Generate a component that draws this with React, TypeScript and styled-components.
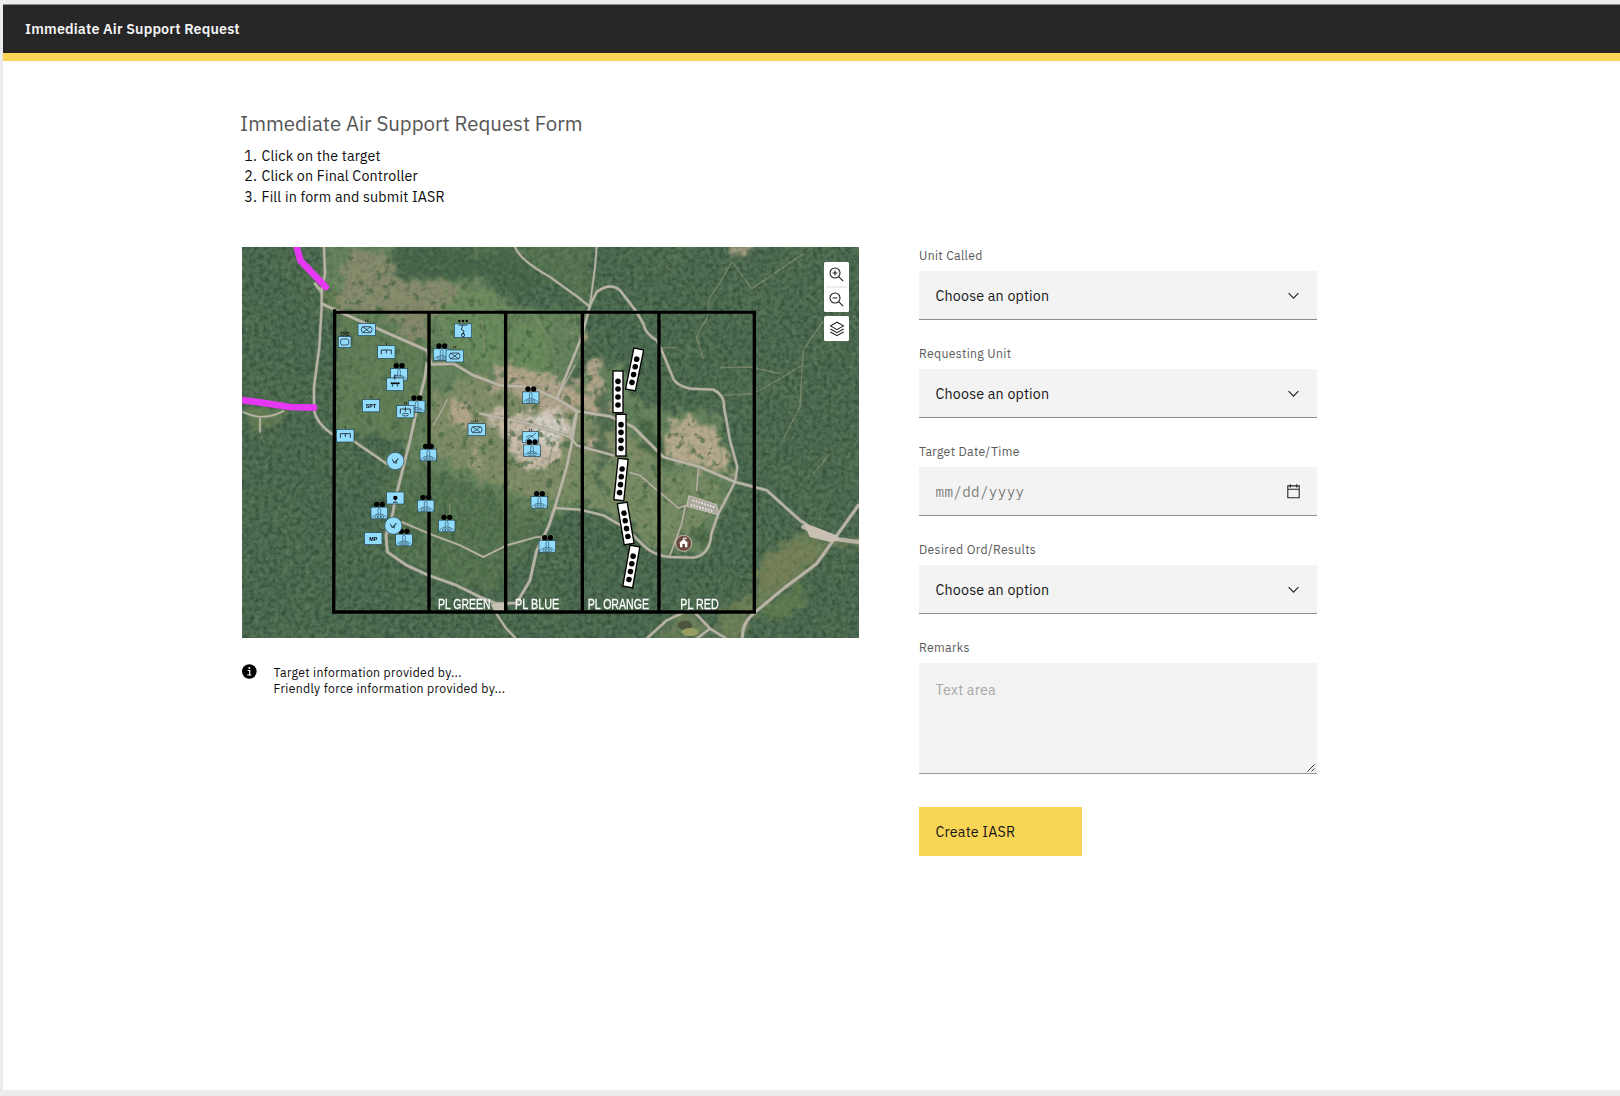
import React from "react";
import styled, { createGlobalStyle } from "styled-components";

const SANS = `"IBM Plex Sans", Roboto, "Liberation Sans", sans-serif`;

const GlobalStyle = createGlobalStyle`
  * { box-sizing: border-box; }
  body { margin: 0; background: #ececec; font-family: ${SANS}; }
`;

/* ---------- page shell ---------- */

const Shell = styled.div`
  height: 1096px;
  padding: 4px 0 6px 3px;
  overflow: hidden;
  background: #ececec;
`;

const Page = styled.div`
  height: 100%;
  background: #fff;
`;

const Header = styled.header`
  display: flex;
  align-items: center;
  height: 57px;
  padding: 0 0 1px 22px;
  background: #262626;
  border-top: 1px solid #8e8e8e;
  border-bottom: 8px solid #f9d556;
`;

const Brand = styled.span`
  color: #f4f4f4;
  font-size: 14.29px;
  font-weight: 600;
  letter-spacing: 0.163px;
  white-space: nowrap;
`;

const Main = styled.main`
  padding: 49px 0 0 237px;
`;

const Title = styled.h1`
  margin: 0;
  height: 28px;
  color: #565656;
  font-size: 20.42px;
  font-weight: 400;
  line-height: 28px;
`;

const Steps = styled.ol`
  margin: 8px 0 40px;
  padding: 0 0 0 4.3px;
  list-style: none;
  color: #0c0c0c;
  font-size: 14.29px;
  letter-spacing: 0.163px;
  line-height: 20.4px;
  height: 61px;
`;

const Step = styled.li`
  display: grid;
  grid-template-columns: 17.2px auto;
`;

const Columns = styled.div`
  display: grid;
  grid-template-columns: 617px 398px;
  column-gap: 60px;
  align-items: start;
  padding-left: 2px;
`;

/* ---------- map ---------- */

const MapFrame = styled.div`
  position: relative;
  height: 391px;
  overflow: hidden;
  background: #46634c;
`;

const MapSvg = styled.svg`
  display: block;
  width: 617px;
  height: 391px;
`;

const MapControls = styled.div`
  position: absolute;
  top: 15px;
  right: 10px;
  display: flex;
  flex-direction: column;
  gap: 4px;
  width: 25px;
`;

const ControlGroup = styled.div`
  display: flex;
  flex-direction: column;
  background: #fff;
  border-radius: 1.5px;
`;

const ControlButton = styled.button`
  display: grid;
  place-items: center;
  height: 25px;
  padding: 0;
  border: 0;
  background: transparent;
  color: #161616;
`;

const ControlRule = styled.hr`
  width: 20px;
  height: 2px;
  margin: -1px auto;
  border: 0;
  background: #ededed;
`;

const Note = styled.div`
  display: flex;
  gap: 16.6px;
  padding-top: 25.5px;
  color: #0c0c0c;
  font-size: 12.25px;
  letter-spacing: 0.327px;
  line-height: 16.3px;
  white-space: nowrap;
`;

const NoteLines = styled.div`
  display: flex;
  flex-direction: column;
`;

/* ---------- form ---------- */

const Form = styled.form`
  display: flex;
  flex-direction: column;
  gap: 25px;
`;

const Field = styled.div`
  display: flex;
  flex-direction: column;
  gap: 8px;
`;

const Label = styled.label`
  height: 16px;
  color: #5a5a5a;
  font-size: 12.25px;
  letter-spacing: 0.327px;
  line-height: 16px;
`;

const Picker = styled.button`
  display: flex;
  align-items: center;
  justify-content: space-between;
  height: 49px;
  padding: 1px 15px 0 16.5px;
  border: 0;
  border-bottom: 1px solid #8d8d8d;
  background: #f3f3f3;
  color: #161616;
  font: 400 14.29px/20px ${SANS};
  letter-spacing: 0.163px;
  text-align: left;
`;

const DateBox = styled.div`
  display: flex;
  align-items: center;
  height: 49px;
  padding: 1px 15px 0 16.5px;
  border-bottom: 1px solid #8d8d8d;
  background: #f3f3f3;
`;

const DateInput = styled.input`
  flex: 1;
  min-width: 0;
  height: 30px;
  padding: 0;
  border: 0;
  outline: 0;
  background: transparent;
  font: 400 14.29px/20px "IBM Plex Mono", "Liberation Mono", monospace;
  letter-spacing: 0.327px;
  &::placeholder { color: #7c7c7c; opacity: 1; }
`;

const AreaBox = styled.div`
  position: relative;
  height: 111px;
  border-bottom: 1px solid #9a9a9a;
  background: #f3f3f3;
`;

const Area = styled.textarea`
  display: block;
  width: 100%;
  height: 100%;
  padding: 17px 16.5px;
  border: 0;
  outline: 0;
  resize: none;
  background: transparent;
  font: 400 14.29px/20px ${SANS};
  letter-spacing: 0.163px;
  &::placeholder { color: #a8a8a8; opacity: 1; }
`;

const Grip = styled.svg`
  position: absolute;
  right: 2px;
  bottom: 1px;
`;

const Submit = styled.button`
  width: 163px;
  height: 49px;
  margin-top: 8px;
  padding: 1px 16.5px 0;
  border: 0;
  background: #f9d556;
  color: #161616;
  font: 400 14.29px/20px ${SANS};
  letter-spacing: 0.163px;
  text-align: left;
`;

/* ---------- icons ---------- */

const ZoomIcon = ({ plus }: { plus?: boolean }) => (
  <svg width="15" height="15" viewBox="0 0 15 15" fill="none" stroke="currentColor" strokeWidth="1.05">
    <circle cx="6" cy="6" r="5" />
    <path d={plus ? "M9.6 9.6 14.2 14.2M3.6 6h4.8M6 3.6v4.8" : "M9.6 9.6 14.2 14.2M3.6 6h4.8"} />
  </svg>
);

const LayersIcon = () => (
  <svg width="16" height="16" viewBox="0 0 16 16" fill="none" stroke="currentColor" strokeWidth="1.05" strokeLinejoin="round">
    <path d="M8 1.2 14.6 4.9 8 8.6 1.4 4.9Z" />
    <path d="M1.4 8 8 11.6 14.6 8M1.4 11 8 14.6 14.6 11" />
  </svg>
);

const ChevronIcon = () => (
  <svg width="17" height="17" viewBox="0 0 17 17" fill="none" stroke="#262626" strokeWidth="1.2">
    <path d="M3.6 6.2 8.5 11.1 13.4 6.2" />
  </svg>
);

const CalendarIcon = () => (
  <svg width="17" height="17" viewBox="0 0 17 17" fill="none" stroke="#262626" strokeWidth="1.1">
    <path d="M2.8 2.9h11.4v11.9H2.8ZM2.8 6.3h11.4M5.3 1.2v3.4M11.7 1.2v3.4" />
  </svg>
);

const InfoIcon = () => (
  <svg width="15" height="15" viewBox="0 0 15 15">
    <circle cx="7.3" cy="7.5" r="7.3" fill="#000" />
    <circle cx="7.3" cy="4" r="1" fill="#fff" />
    <path d="M5.6 6.5h2.1v4.4M5.2 11h4.2" fill="none" stroke="#fff" strokeWidth="1.15" />
  </svg>
);

/* ---------- map symbols ---------- */

type Pt = [number, number];
const SKY = "#92dcfe";
const INK = "#22424f";

const Plate = ({ x, y, w = 52, h = 36 }: { x: number; y: number; w?: number; h?: number }) => (
  <rect x={x - w / 2} y={y - h / 2} width={w} height={h} fill={SKY} stroke={INK} strokeWidth="2" />
);

const Bars = ({ x, y, n = 2 }: { x: number; y: number; n?: number }) => (
  <path d={n === 2 ? `M${x - 3} ${y}v8M${x + 3} ${y}v8` : `M${x} ${y}v8`} stroke="#111" strokeWidth="2" />
);

const Battery = ({ x, y }: { x: number; y: number }) => (
  <g>
    <Plate x={x} y={y} w={50} h={35} />
    <g fill="none" stroke={INK} strokeWidth="1.7">
      <path d={`M${x - 25} ${y + 15}Q${x} ${y - 10} ${x + 25} ${y + 15}`} />
      <path d={`M${x - 4} ${y + 8}v-20q4-6 8 0v20`} />
      <circle cx={x - 9} cy={y + 12} r="4" />
      <circle cx={x} cy={y + 12} r="4" />
      <circle cx={x + 9} cy={y + 12} r="4" />
    </g>
    <circle cx={x - 8} cy={y - 26} r="8" />
    <circle cx={x + 9} cy={y - 26} r="8" />
  </g>
);

const Mechanized = ({ x, y }: { x: number; y: number }) => (
  <g>
    <Plate x={x} y={y} />
    <Bars x={x} y={y - 30} />
    <g fill="none" stroke="#111" strokeWidth="2">
      <rect x={x - 16} y={y - 9} width="32" height="18" rx="8" />
      <path d={`M${x - 12} ${y - 9}L${x + 12} ${y + 9}M${x + 12} ${y - 9}L${x - 12} ${y + 9}`} />
    </g>
  </g>
);

const Engineer = ({ x, y }: { x: number; y: number }) => (
  <g>
    <Plate x={x} y={y} h={38} />
    <Bars x={x} y={y - 29} n={1} />
    <path d={`M${x - 15} ${y + 7}v-13h30v13M${x} ${y - 6}v10`} fill="none" stroke="#111" strokeWidth="2.4" />
  </g>
);

const Beacon = ({ x, y }: { x: number; y: number }) => (
  <g>
    <circle cx={x} cy={y} r="26" fill={SKY} stroke={INK} strokeWidth="2" />
    <path d={`M${x - 9} ${y - 5}q1 12 14 12M${x - 4} ${y + 5}l6-6 1 4 3-9h4`} fill="none" stroke="#111" strokeWidth="2.4" />
  </g>
);

const Minefield = ({ x, y, r }: { x: number; y: number; r: number }) => (
  <g transform={`translate(${x} ${y}) rotate(${r})`}>
    <rect x="-15" y="-62" width="30" height="125" fill="#fff" stroke="#000" strokeWidth="4" />
    {[-31, -8, 16, 40].map((d) => (
      <circle key={d} cx="0" cy={d} r="8.4" />
    ))}
  </g>
);

const batteries: Pt[] = [
  [605, 343], [477, 402], [530, 499], [872, 472], [565, 644], [418, 818],
  [557, 797], [620, 857], [492, 899], [898, 786], [922, 918],
];
const mechanized: Pt[] = [[380, 268], [644, 347], [710, 568]];
const engineers: Pt[] = [[439, 335], [316, 586]];
const beacons: Pt[] = [[466, 662], [460, 856]];
const minefields: [number, number, number][] = [
  [1184, 387, 11.5], [1134, 454, 0], [1143, 584, 0], [1143, 717, 6], [1157, 849, -9.5], [1174, 978, 10],
];
const phaseLines = [
  { x: 594, w: 158, name: "PL GREEN" },
  { x: 825, w: 133, name: "PL BLUE" },
  { x: 1043, w: 184, name: "PL ORANGE" },
  { x: 1321, w: 115, name: "PL RED" },
];

const roads: { d: string; w: number }[] = [
  { d: "M252 20L255 100 245 150 245 200 238 320 222 440 222 510Q230 550 275 580L345 605 440 670", w: 9 },
  { d: "M225 130L245 155M245 190L345 235 560 330", w: 10 },
  { d: "M560 330L575 372 640 370 700 405 780 435 870 440 950 475 1010 512 1110 528 1180 560 1270 650 1380 680 1485 725 1580 750 1680 840 1740 880", w: 10 },
  { d: "M560 370L555 410 530 510 510 600 490 680 465 780 458 820 438 885 442 935 500 975 565 1005 650 1035 720 1070 770 1090 830 1088 870 1020 890 930 925 860 945 800 980 680 995 610 1010 515", w: 10 },
  { d: "M945 803L1020 808 1090 825 1160 865 1210 915Q1240 945 1290 950L1360 952Q1410 945 1414 880L1435 820 1485 725 1492 680 1470 600 1452 500Q1455 465 1420 448L1350 445Q1310 435 1300 415L1265 330 1250 300Q1215 280 1210 250L1190 215 1140 150Q1110 125 1070 155L1050 195 1025 290 950 475", w: 9 },
  { d: "M825 20Q840 60 930 110L1020 175 1050 200", w: 8 },
  { d: "M1070 20L1065 80 1050 195", w: 7 },
  { d: "M485 845L580 885 660 915 730 950 800 915 890 890 925 890", w: 7 },
  { d: "M1855 795L1780 900 1730 970 1630 1045 1540 1120Q1505 1150 1507 1195", w: 11 },
  { d: "M1690 860L1780 895 1855 905", w: 14 },
  { d: "M1220 1195L1280 1140 1345 1110M1360 1112L1410 1165 1460 1195M1410 1165L1370 1195", w: 9 },
  { d: "M1170 697L1200 705 1240 740 1315 803 1340 795M1335 800L1325 850 1290 945M1375 685L1370 750", w: 6 },
  { d: "M10 515Q70 545 130 512M60 530V575", w: 7 },
  { d: "M720 520L860 548 990 590 1010 615 1120 645M1010 515L990 590", w: 9 },
  { d: "M580 555L600 520 622 478M950 475L1005 375", w: 5 },
  { d: "M766 1115L795 1160 825 1192", w: 8 },
];

const trails = [
  "M1475 65L1450 110 1405 180 1402 230 1370 290 1390 355M1478 65L1535 145 1580 115 1690 40",
  "M1750 240L1690 330 1685 400 1680 500 1630 595M1685 375L1630 410 1540 460 1450 465",
  "M1255 325L1310 320M1440 382L1530 380 1620 400M740 445L710 550M725 240L735 340M870 210L920 280",
  "M1770 640L1720 700M940 600L910 760M630 790L625 880",
];

const Terrain = () => (
  <g>
    <defs>
      <filter id="canopy" x="0" y="0" width="100%" height="100%" colorInterpolationFilters="sRGB">
        <feTurbulence type="fractalNoise" baseFrequency="0.071" numOctaves="4" seed="4" />
        <feColorMatrix values="0 0 0 0 0.14  0 0 0 0 0.24  0 0 0 0 0.17  2.6 0 0 0 -1.08" />
      </filter>
      <filter id="glint" x="0" y="0" width="100%" height="100%" colorInterpolationFilters="sRGB">
        <feTurbulence type="fractalNoise" baseFrequency="0.067" numOctaves="4" seed="21" />
        <feColorMatrix values="0 0 0 0 0.48  0 0 0 0 0.6  0 0 0 0 0.45  0 2.2 0 0 -1.05" />
      </filter>
      <filter id="drift" x="0" y="0" width="100%" height="100%" colorInterpolationFilters="sRGB">
        <feTurbulence type="fractalNoise" baseFrequency="0.008" numOctaves="3" seed="2" />
        <feColorMatrix values="0 0 0 0 0.4  0 0 0 0 0.52  0 0 0 0 0.34  0 3 0 0 -1.3" />
      </filter>
      <filter id="patchy" x="0" y="0" width="100%" height="100%" colorInterpolationFilters="sRGB">
        <feTurbulence type="fractalNoise" baseFrequency="0.035" numOctaves="4" seed="9" />
        <feColorMatrix values="0 0 0 0 0.27  0 0 0 0 0.4  0 0 0 0 0.26  8 0 0 0 -4.8" result="trees" />
        <feComposite in="trees" in2="SourceAlpha" operator="in" />
      </filter>
      <filter id="ragged" x="-10%" y="-10%" width="120%" height="120%" colorInterpolationFilters="sRGB">
        <feTurbulence type="fractalNoise" baseFrequency="0.03" numOctaves="4" seed="7" result="n" />
        <feDisplacementMap in="SourceGraphic" in2="n" scale="75" xChannelSelector="R" yChannelSelector="G" />
        <feGaussianBlur stdDeviation="4" />
      </filter>
    </defs>

    <rect x="0" y="0" width="1870" height="1210" fill="#4d6b52" />
    <rect x="0" y="0" width="1870" height="1210" filter="url(#drift)" opacity="0.2" />
    <rect x="0" y="0" width="1870" height="1210" filter="url(#canopy)" opacity="0.42" />
    <g filter="url(#ragged)">
      <path fill="#69865e" opacity="0.92" d="M260 0H455L460 100 600 125 680 100 760 140 840 210 1030 210 1030 330 950 475 1060 370 1150 370 1190 480 1300 510 1440 520 1460 600 1490 720 1430 850 1410 930 1360 950 1260 940 1180 860 1080 820 1020 800 930 830 800 800 760 760 640 710 560 690 500 660 470 600 420 590 290 570 290 220 250 190Z" />
      <path fill="#5d7c52" opacity="0.6" d="M680 0H1060L1050 190 930 110 850 60 700 70ZM290 220H560V590H400L290 560ZM440 640L560 690 760 760 930 830 880 900 760 1060 640 1030 450 930Z" />
      <path fill="#918f70" opacity="0.8" d="M310 40L450 30 460 110 600 130 720 140 800 190 810 215H290L300 130ZM430 220H560V310L500 290Z" />
      <path fill="#6b8c5d" opacity="0.9" d="M650 150L760 140 800 200 790 400 640 340 590 230ZM810 240H930L925 420 810 380Z" />
      <path fill="#828e68" d="M575 480L700 400 930 430 1020 520 1120 540 1250 640 1300 800 1180 840 1000 790 850 770 700 700 580 650Z" />
      <path fill="#798b64" d="M1020 640L1260 660 1330 800 1320 900 1260 920 1100 800 950 790ZM1300 690L1440 720 1420 820 1350 900 1280 850Z" />
      <path fill="#b5a68c" d="M640 480L690 470 690 540 650 560 620 530ZM760 370L930 400 1040 460 1080 500 1060 520 900 500 760 440ZM1045 360L1070 350 1090 440 1120 520 1040 510ZM1040 590L1110 590 1100 640 1040 620Z" />
      <path fill="#b9ab8e" d="M1290 540L1360 535 1430 570 1480 700 1400 690 1280 650 1265 600Z" />
      <path fill="#cbbcaa" d="M740 500L860 520 950 500 1000 540 970 600 945 660 900 690 850 670 810 640 810 590 760 560Z" />
      <path fill="#d9d1c8" d="M860 520L970 525 980 570 930 620 890 600Z" />
      <path fill="#bcae90" opacity="0.8" d="M1010 280L1040 280 1030 330ZM680 550L740 560 710 600ZM1470 0H1560L1480 60ZM690 640L720 600 710 690Z" />
      <path fill="#6d7f57" d="M1690 870L1780 910 1720 980 1630 1050 1540 1120 1500 1195 1430 1195 1440 1110 1550 1060 1530 1020 1560 960Z" />
      <path fill="#7f8159" opacity="0.6" d="M1680 900L1740 920 1600 1040 1540 1060 1580 970Z" />
      <path fill="#5e7c50" d="M1640 1060L1700 990 1690 1110 1600 1130 1560 1110Z" />
      <path fill="#6d7f59" d="M1290 1150L1345 1110 1410 1165 1380 1195 1240 1195ZM1790 900H1870V930L1790 920ZM1840 0H1870V60Z" />
      <path fill="#647c53" d="M10 500L140 505 100 560 20 560ZM230 130L300 160 290 210 250 200Z" />
      <path fill="#46644a" opacity="0.8" d="M1080 460L1110 460 1105 600 1080 760 1065 640ZM470 20L700 40 820 20 900 110 850 150 720 110 560 120 480 100Z" />
      <path fill="#41603f" opacity="0.8" d="M1180 520L1250 560 1290 680 1220 640ZM1370 860L1410 870 1400 920 1360 900Z" />
    </g>
    <path filter="url(#patchy)" opacity="0.65" d="M255 20H900L1010 210 1110 360 1440 520 1490 740 1420 940 1260 940 930 860 760 1070 440 930 500 660 290 570 245 160Z" />
    <g fill="none" stroke="#8f9376" strokeWidth="4" opacity="0.7" strokeLinejoin="round">
      {trails.map((d) => <path key={d} d={d} />)}
    </g>
    <rect x="0" y="0" width="1870" height="1210" filter="url(#canopy)" opacity="0.18" />
    <rect x="0" y="0" width="1870" height="1210" filter="url(#glint)" opacity="0.4" />
    <g fill="none" strokeLinejoin="round" strokeLinecap="round">
      {roads.map((r) => <path key={r.d} d={r.d} stroke="#8d8b78" strokeWidth={r.w + 2} opacity="0.5" />)}
      {roads.map((r) => <path key={r.d} d={r.d} stroke="#bfbaae" strokeWidth={r.w - 2} opacity="0.9" />)}
    </g>
    <path d="M1690 850L1720 858 1790 885 1800 900 1770 905 1710 890Z" fill="#c9c0b3" />
    <path d="M1346 766L1430 793 1436 824 1341 798Z" fill="#aca79d" stroke="#c9c4ba" strokeWidth="3" />
    <path d="M1358 780L1424 801M1352 793L1420 813" stroke="#e7e4de" strokeWidth="6" strokeDasharray="5 4" />
    <path d="M752 1090H792V1118H765Z" fill="#d0c9be" opacity="0.9" />
    <ellipse cx="1335" cy="1155" rx="22" ry="14" fill="#454b3a" opacity="0.8" />
    <ellipse cx="1350" cy="1175" rx="26" ry="12" fill="#a5a768" opacity="0.8" />
  </g>
);

const BattleMap = () => (
  <MapSvg viewBox="6 20 1851 1173" preserveAspectRatio="none">
    <Terrain />

    <g fill="none" stroke="#e637f3" strokeWidth="20" strokeLinecap="round" strokeLinejoin="round">
      <path d="M166 5L181 60 257 140" />
      <path d="M-10 477L60 486 150 500 222 502" />
    </g>

    <g fill="none" stroke="#000" strokeWidth="10">
      <path d="M284 207L281 1115H1543V211" />
      <path d="M280 216H1548" strokeWidth="9" />
      <path d="M567 212V1115M797 212V1115M1027 212V1115M1257 212V1115" />
    </g>

    <g fill="#fff" stroke="#fff" strokeWidth="0.8" fontFamily="'Liberation Sans', sans-serif" fontSize="46">
      {phaseLines.map((p) => (
        <text key={p.name} x={p.x} y="1105" textLength={p.w} lengthAdjust="spacingAndGlyphs">{p.name}</text>
      ))}
    </g>

    {minefields.map(([x, y, r]) => <Minefield key={y} x={x} y={y} r={r} />)}

    <g>
      <Plate x={871} y={590} w={48} h={32} />
      <Bars x={871} y={565} />
      <path d="M855 602L888 578M858 592q14-14 24 2" fill="none" stroke={INK} strokeWidth="2" />
    </g>
    {batteries.map(([x, y]) => <Battery key={`${x}-${y}`} x={x} y={y} />)}
    <Battery x={876} y={631} />
    {mechanized.map(([x, y]) => <Mechanized key={x} x={x} y={y} />)}
    {engineers.map(([x, y]) => <Engineer key={x} x={x} y={y} />)}

    <g fill="none" stroke="#111" strokeWidth="2">
      <path d="M303 276h22v12h-22ZM303 276l22 12M325 276l-22 12" />
      <Plate x={314} y={305} w={38} h={33} />
      <rect x="302" y="296" width="24" height="18" rx="5" />
    </g>
    <g>
      <Plate x={669} y={271} h={41} />
      <path d="M656 254h26M668 254l-4 14 8 4-4 12" fill="none" stroke="#111" strokeWidth="2.4" />
      <circle cx="669" cy="284" r="5" fill="none" stroke="#111" strokeWidth="2" />
      <circle cx="658" cy="242" r="3.6" /><circle cx="669" cy="242" r="3.6" /><circle cx="680" cy="242" r="3.6" />
    </g>
    <g>
      <Plate x={465} y={432} w={50} h={38} />
      <path d="M454 429h22M459 429l-2 10M471 429l2 10M464 418v-14h5" fill="none" stroke="#111" strokeWidth="2.4" />
      <circle cx="455" cy="429" r="3" /><circle cx="462" cy="429" r="3" />
      <circle cx="469" cy="429" r="3" /><circle cx="476" cy="429" r="3" />
    </g>
    <g>
      <Plate x={393} y={496} h={37} />
      <Bars x={393} y={466} />
      <text x="393" y="502" textAnchor="middle" fontFamily="'Liberation Sans', sans-serif" fontWeight="700" fontSize="16">SPT</text>
    </g>
    <g>
      <Plate x={496} y={514} h={37} />
      <Bars x={496} y={484} />
      <path d="M481 520v-14h30v14M496 500v14" fill="none" stroke="#111" strokeWidth="2.4" />
      <ellipse cx="496" cy="523" rx="9" ry="4" fill="none" stroke="#111" strokeWidth="2" />
    </g>
    <g>
      <Plate x={466} y={773} />
      <circle cx="466" cy="773" r="6.5" />
      <path d="M459 787q7-8 14 0Z" fill="none" stroke="#111" strokeWidth="1.6" />
    </g>
    <g>
      <Plate x={400} y={895} />
      <text x="400" y="901" textAnchor="middle" fontFamily="'Liberation Sans', sans-serif" fontWeight="700" fontSize="16">MP</text>
    </g>
    {beacons.map(([x, y]) => <Beacon key={x} x={x} y={y} />)}

    <circle cx="1331" cy="909" r="24" fill="#6e4b41" stroke="#e9e2dc" strokeWidth="2" />
    <path d="M1317 909l14-13 14 13h-3v12h-7v-7a4 4 0 0 0-8 0v7h-7v-12Z" fill="#fff" />
    <path d="M1331 899v-6h7v4" fill="none" stroke="#fff" strokeWidth="3" />
  </MapSvg>
);

/* ---------- page ---------- */

const steps = ["Click on the target", "Click on Final Controller", "Fill in form and submit IASR"];

const Select = ({ label }: { label: string }) => (
  <Field>
    <Label>{label}</Label>
    <Picker type="button">
      <span>Choose an option</span>
      <ChevronIcon />
    </Picker>
  </Field>
);

export default function App() {
  return (
    <>
      <GlobalStyle />
      <Shell>
        <Page>
          <Header>
            <Brand>Immediate Air Support Request</Brand>
          </Header>
          <Main>
            <Title>Immediate Air Support Request Form</Title>
            <Steps>
              {steps.map((s, i) => (
                <Step key={s}>
                  <span>{i + 1}.</span>
                  <span>{s}</span>
                </Step>
              ))}
            </Steps>
            <Columns>
              <section>
                <MapFrame>
                  <BattleMap />
                  <MapControls>
                    <ControlGroup>
                      <ControlButton aria-label="Zoom in"><ZoomIcon plus /></ControlButton>
                      <ControlRule />
                      <ControlButton aria-label="Zoom out"><ZoomIcon /></ControlButton>
                    </ControlGroup>
                    <ControlGroup>
                      <ControlButton aria-label="Layers"><LayersIcon /></ControlButton>
                    </ControlGroup>
                  </MapControls>
                </MapFrame>
                <Note>
                  <InfoIcon />
                  <NoteLines>
                    <span>Target information provided by...</span>
                    <span>Friendly force information provided by...</span>
                  </NoteLines>
                </Note>
              </section>
              <Form>
                <Select label="Unit Called" />
                <Select label="Requesting Unit" />
                <Field>
                  <Label>Target Date/Time</Label>
                  <DateBox>
                    <DateInput placeholder="mm/dd/yyyy" />
                    <CalendarIcon />
                  </DateBox>
                </Field>
                <Select label="Desired Ord/Results" />
                <Field>
                  <Label>Remarks</Label>
                  <AreaBox>
                    <Area placeholder="Text area" />
                    <Grip width="8" height="8" viewBox="0 0 8 8" fill="none" stroke="#333" strokeWidth="1">
                      <path d="M0.5 7.5 7.5 0.5M4.5 7.5 7.5 4.5" />
                    </Grip>
                  </AreaBox>
                </Field>
                <Submit type="button">Create IASR</Submit>
              </Form>
            </Columns>
          </Main>
        </Page>
      </Shell>
    </>
  );
}
